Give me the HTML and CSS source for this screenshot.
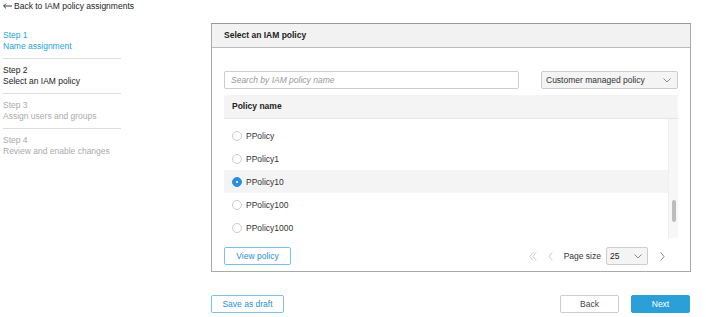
FILE: index.html
```html
<!DOCTYPE html>
<html lang="en">
<head>
    <meta charset="UTF-8">
    <title>Select an IAM policy</title>
    <link rel="stylesheet" href="styles.css">
</head>
<body>
    <div class="top-link">
        <svg class="back-arrow" width="9" height="6" viewBox="0 0 9 6"><path d="M9 3 L0.8 3 M3 0.6 L0.6 3 L3 5.4" fill="none" stroke="#222" stroke-width="0.9"/></svg>
        Back to IAM policy assignments
    </div>

    <div class="layout">
        <!-- Steps -->
        <div class="steps">
            <div class="step done">
                <div>Step 1</div>
                <div>Name assignment</div>
            </div>
            <div class="step current">
                <div>Step 2</div>
                <div>Select an IAM policy</div>
            </div>
            <div class="step">
                <div>Step 3</div>
                <div>Assign users and groups</div>
            </div>
            <div class="step last">
                <div>Step 4</div>
                <div>Review and enable changes</div>
            </div>
        </div>

        <div class="main">
            <div class="panel">
                <div class="panel-header">Select an IAM policy</div>
                <div class="panel-body">
                    <div class="filters">
                        <div class="search">Search by IAM policy name</div>
                        <div class="select">
                            <span>Customer managed policy</span>
                            <svg width="8" height="5" viewBox="0 0 8 5"><path d="M0.5 0.5 L4 4 L7.5 0.5" fill="none" stroke="#888" stroke-width="1"/></svg>
                        </div>
                    </div>

                    <div class="table-head">Policy name</div>
                    <div class="table-rows">
                        <div class="rows">
                            <div class="row"><span class="radio"></span>PPolicy</div>
                            <div class="row"><span class="radio"></span>PPolicy1</div>
                            <div class="row selected"><span class="radio checked"></span>PPolicy10</div>
                            <div class="row"><span class="radio"></span>PPolicy100</div>
                            <div class="row"><span class="radio"></span>PPolicy1000</div>
                        </div>
                        <div class="scroll-track"><div class="scroll-thumb"></div></div>
                    </div>

                    <div class="table-foot">
                        <button class="btn btn-outline">View policy</button>
                        <div class="pager">
                            <svg class="pg-icon" width="8" height="9" viewBox="0 0 8 9"><path d="M4 0.5 L0.8 4.5 L4 8.5 M7.2 0.5 L4 4.5 L7.2 8.5" fill="none" stroke="#ccc" stroke-width="1"/></svg>
                            <svg class="pg-icon" width="5" height="9" viewBox="0 0 5 9"><path d="M4.2 0.5 L1 4.5 L4.2 8.5" fill="none" stroke="#ccc" stroke-width="1"/></svg>
                            <span class="pg-label">Page size</span>
                            <div class="select small">
                                <span>25</span>
                                <svg width="8" height="5" viewBox="0 0 8 5"><path d="M0.5 0.5 L4 4 L7.5 0.5" fill="none" stroke="#888" stroke-width="1"/></svg>
                            </div>
                            <svg class="pg-icon" width="5" height="9" viewBox="0 0 5 9"><path d="M0.8 0.5 L4 4.5 L0.8 8.5" fill="none" stroke="#888" stroke-width="1"/></svg>
                        </div>
                    </div>
                </div>
            </div>

            <div class="actions">
                <button class="btn btn-outline draft">Save as draft</button>
                <div class="actions-right">
                    <button class="btn btn-plain">Back</button>
                    <button class="btn btn-primary">Next</button>
                </div>
            </div>
        </div>
    </div>
</body>
</html>
```

FILE: styles.css
```css
body {
    margin: 0;
    font-family: 'Liberation Sans', Arial, sans-serif;
    font-size: 8.5px;
    color: #222;
    background: #fff;
}

.top-link {
    display: flex;
    align-items: center;
    gap: 2px;
    padding: 0 3px;
    height: 12px;
    line-height: 12px;
}

.layout {
    display: flex;
    margin-top: 11px;
}

/* Steps */
.steps {
    width: 118px;
    margin-left: 3px;
    padding-top: 1px;
}

.step {
    padding: 6px 0;
    line-height: 11px;
    border-bottom: 1px solid #ddd;
    color: #aaa;
}

.step.done {
    color: #2a9fd8;
}

.step.current {
    color: #222;
}

.step.last {
    border-bottom: none;
}

/* Panel */
.main {
    margin-left: 90px;
    width: 480px;
}

.panel {
    border: 1px solid #aaa;
    border-top-color: #999;
}

.panel-header {
    height: 23px;
    line-height: 23px;
    padding-left: 12px;
    background: #f2f2f2;
    border-bottom: 1px solid #bbb;
    font-weight: bold;
}

.panel-body {
    padding: 23px 12px 6px 12px;
}

.filters {
    display: flex;
    justify-content: space-between;
}

.search {
    width: 287px;
    height: 16px;
    line-height: 16px;
    border: 1px solid #ccc;
    border-radius: 2px;
    padding-left: 6px;
    color: #999;
    font-style: italic;
}

.select {
    display: flex;
    align-items: center;
    justify-content: space-between;
    width: 125px;
    height: 16px;
    padding: 0 6px 0 4px;
    border: 1px solid #ccc;
    border-radius: 2px;
    background: #f4f4f4;
    color: #333;
}

.select.small {
    width: 32px;
    height: 16px;
    padding: 0 5px 0 3px;
    margin: 0 12px 0 5px;
    color: #222;
}

.table-head {
    margin-top: 6px;
    height: 23px;
    line-height: 23px;
    padding-left: 8px;
    background: #f4f4f4;
    border-bottom: 1px solid #e6e6e6;
    font-weight: bold;
}

.table-rows {
    display: flex;
    height: 119px;
    overflow: hidden;
}

.rows {
    flex: 1;
    padding-top: 5px;
}

.row {
    display: flex;
    align-items: center;
    height: 23px;
    padding-left: 8px;
    color: #333;
}

.row.selected {
    background: #f4f4f4;
}

.radio {
    width: 8px;
    height: 8px;
    border: 1px solid #ccc;
    border-radius: 50%;
    margin-right: 4px;
    background: #fff;
    position: relative;
}

.radio.checked {
    background: #2a8fe0;
    border-color: #2a8fe0;
}

.radio.checked::after {
    content: "";
    position: absolute;
    left: 3px;
    top: 3px;
    width: 2px;
    height: 2px;
    border-radius: 50%;
    background: #fff;
}

.scroll-track {
    width: 9px;
    background: #f7f7f7;
    border-left: 1px solid #eee;
    padding-top: 81px;
}

.scroll-thumb {
    width: 4px;
    height: 22px;
    margin-left: 3px;
    border-radius: 2px;
    background: #bdbdbd;
}

.table-foot {
    display: flex;
    justify-content: space-between;
    align-items: center;
    margin-top: 9px;
}

.pager {
    display: flex;
    align-items: center;
    margin-right: 13px;
}

.pg-icon {
    margin-right: 11px;
}

.pg-icon:last-child {
    margin-right: 0;
}

.pg-label {
    color: #333;
}

/* Buttons */
.btn {
    font-family: 'Liberation Sans', Arial, sans-serif;
    font-size: 8.5px;
    height: 18px;
    padding: 0;
    border-radius: 2px;
    background: #fff;
    cursor: pointer;
}

.btn-outline {
    width: 67px;
    border: 1px solid #7cc0e6;
    color: #2a8fd0;
}

.btn-plain {
    width: 59px;
    border: 1px solid #ccc;
    color: #444;
}

.btn-primary {
    width: 59px;
    border: 1px solid #2a9fd8;
    background: #2a9fd8;
    color: #fff;
}

.actions {
    display: flex;
    justify-content: space-between;
    margin-top: 23px;
}

.btn.draft {
    width: 73px;
}

.actions-right {
    display: flex;
    gap: 12px;
    margin-right: 1px;
}
```
